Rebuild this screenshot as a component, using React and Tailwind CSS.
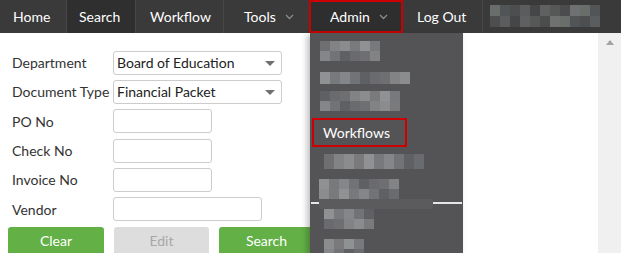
import React from "react";

const shades = ["#6f6f72", "#7a7a7d", "#858689", "#6a6b6e", "#8b8c8e", "#77797c", "#5f6063", "#828385", "#909192", "#717376"];
const navShades = ["#454647", "#4d4e4f", "#565857", "#4a4c4d", "#5e6062", "#6a6e6b", "#525558", "#6f7170", "#5a5c5e"];

// pixelated (censored) block
const Mosaic = ({ cols, rows, cell = 10, cellH, seed = 1, palette = shades, className = "" }) => {
	const h = cellH || cell;
	const cells = [];
	let s = seed;
	for (let r = 0; r < rows; r++) {
		for (let c = 0; c < cols; c++) {
			s = (s * 9301 + 49297) % 233280;
			cells.push(palette[s % palette.length]);
		}
	}
	return (
		<div className={`grid ${className}`} style={{ gridTemplateColumns: `repeat(${cols}, ${cell}px)`, gridAutoRows: `${h}px` }}>
			{cells.map((c, i) => (
				<div key={i} style={{ background: c }} />
			))}
		</div>
	);
};

const Chevron = () => (
	<svg width="9" height="6" viewBox="0 0 9 6" className="ml-[9px]">
		<path d="M1 1 L4.5 4.5 L8 1" fill="none" stroke="#8a8a8a" strokeWidth="1.3" />
	</svg>
);

const Caret = () => (
	<svg width="10" height="6" viewBox="0 0 10 6" className="absolute right-[6px] top-[9px]">
		<path d="M0 0 L10 0 L5 5 Z" fill="#707070" />
	</svg>
);

const Field = ({ label, children }) => (
	<div className="flex items-center h-[29.3px]">
		<div className="w-[101px] text-[14px] text-[#333]">{label}</div>
		{children}
	</div>
);

const Select = ({ value }) => (
	<div className="relative w-[169px] h-[24px] border border-[#ccc] rounded-[3px] pl-[3px] text-[14px] text-[#222] leading-[22px] bg-white">
		{value}
		<Caret />
	</div>
);

const Input = ({ w }) => <div className={`${w} h-[24px] border border-[#ccc] rounded-[3px] bg-white`} />;

export default function App() {
	return (
		<div className="relative w-[621px] h-[253px] overflow-hidden bg-white" style={{ fontFamily: "Lato, 'Noto Sans', sans-serif" }}>
			<nav className="flex h-[33px] bg-[#3a3a3a] text-white text-[14px]">
				<div className="w-[67px] flex items-center pl-[13px] border-r border-[#474747]">Home</div>
				<div className="w-[69px] flex items-center pl-[12px] bg-[#2f2f2f] border-r border-[#474747]">Search</div>
				<div className="w-[88px] flex items-center pl-[14px] border-r border-[#474747]">Workflow</div>
				<div className="w-[85px] flex items-center pl-[20px]">
					Tools
					<Chevron />
				</div>
				<div className="w-[94px] flex items-center pl-[19px] bg-[#2e2e2e] border-2 border-[#cc0000]">
					Admin
					<Chevron />
				</div>
				<div className="w-[80px] flex items-center pl-[14px] border-r border-[#474747]">Log Out</div>
				<div className="pl-[7px] pt-[5px]">
					<Mosaic cols={11} rows={2} cell={10} cellH={11} seed={7} palette={navShades} />
				</div>
			</nav>

			<div className="flex h-[220px]">
				<div className="flex-1 pl-[12px] pt-[15px]">
					<Field label="Department">
						<Select value="Board of Education" />
					</Field>
					<Field label="Document Type">
						<Select value="Financial Packet" />
					</Field>
					<Field label="PO No">
						<Input w="w-[99px]" />
					</Field>
					<Field label="Check No">
						<Input w="w-[99px]" />
					</Field>
					<Field label="Invoice No">
						<Input w="w-[99px]" />
					</Field>
					<Field label="Vendor">
						<Input w="w-[149px]" />
					</Field>
					<div className="flex gap-[10px] -ml-[4px] mt-[3px]">
						<div className="w-[96px] h-[28px] rounded-[3px] bg-[#62b046] text-white text-[14px] flex items-center justify-center">Clear</div>
						<div className="w-[95px] h-[28px] rounded-[3px] bg-[#dddddd] text-[#a8a8a8] text-[14px] flex items-center justify-center">Edit</div>
						<div className="w-[95px] h-[28px] rounded-[3px] bg-[#62b046] text-white text-[14px] flex items-center justify-center">Search</div>
					</div>
				</div>
				<div className="w-[23px] bg-[#f0f0f0] flex justify-center pt-[7px]">
					<svg width="8" height="5" viewBox="0 0 8 5">
						<path d="M0 5 L4 0 L8 5 Z" fill="#a3a3a3" />
					</svg>
				</div>
			</div>

			<div className="absolute left-[310px] top-[33px] w-[153px] h-[220px] bg-[#545456] shadow-[-3px_2px_6px_rgba(0,0,0,0.25)]">
				<div className="relative h-full">
					<Mosaic className="absolute left-[10px] top-[8px]" cols={6} rows={2} cellH={10} seed={3} />
					<Mosaic className="absolute left-[10px] top-[39px]" cols={9} rows={1} cellH={12} seed={11} />
					<Mosaic className="absolute left-[10px] top-[58px]" cols={8} rows={2} cellH={10} seed={19} />
					<div className="absolute left-[2px] top-[85px] w-[95px] h-[29px] border-2 border-[#cc0000] flex items-center pl-[9px] text-white text-[14px]">
						Workflows
					</div>
					<Mosaic className="absolute left-[14px] top-[121px]" cols={10} rows={1} cellH={15} seed={23} />
					<Mosaic className="absolute left-[9px] top-[146px]" cols={8} rows={2} cellH={10} seed={31} />
					<div className="absolute left-[1px] right-[1px] top-[169px] h-[2px] bg-[#e6e6e6]" />
					<div className="absolute left-[9px] top-[166px] w-[114px] h-[10px] bg-[#5b5b5d]" />
					<Mosaic className="absolute left-[14px] top-[176px]" cols={5} rows={2} cellH={10} seed={41} />
					<Mosaic className="absolute left-[14px] top-[206px]" cols={4} rows={2} cellH={10} seed={47} />
				</div>
			</div>
		</div>
	);
}
